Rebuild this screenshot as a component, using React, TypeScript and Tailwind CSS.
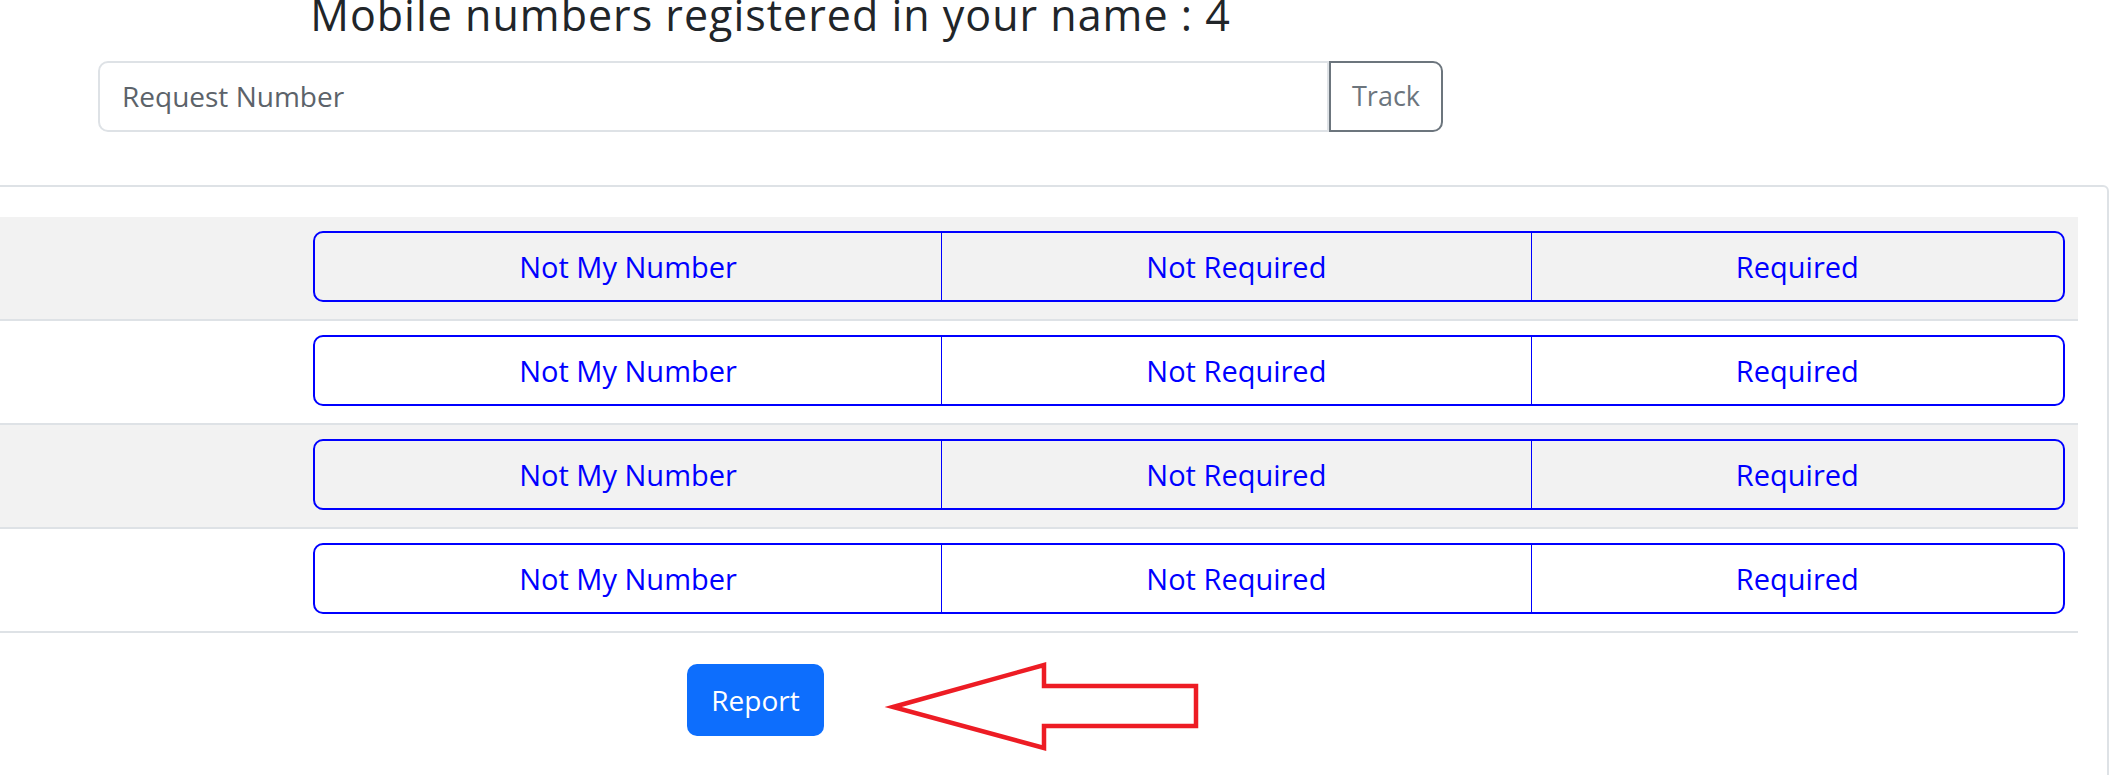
import React from "react";

const rows = [0, 1, 2, 3];

function ChoiceGroup() {
  return (
    <div className="flex flex-1 h-[71px] border-2 border-[#0000ff] rounded-[10px] overflow-hidden">
      <button className="flex-auto px-2 text-[29px] text-[#0000ff] leading-none">Not My Number</button>
      <button className="flex-auto px-2 text-[29px] text-[#0000ff] leading-none border-l-[1.5px] border-[#0000ff]">Not Required</button>
      <button className="flex-auto px-2 text-[29px] text-[#0000ff] leading-none border-l-[1.5px] border-[#0000ff]">Required</button>
    </div>
  );
}

export default function App() {
  return (
    <div
      className="relative w-[2126px] h-[775px] overflow-hidden bg-white"
      style={{ fontFamily: '"Open Sans", "Noto Sans", sans-serif' }}
    >
      <div className="ml-[98px] w-[1345px]">
        <h2 className="-mt-[11px] text-center text-[43px] leading-[1.2] tracking-[1px] text-[#212529] font-normal whitespace-nowrap">
          Mobile numbers registered in your name : 4
        </h2>
        <div className="mt-[20px] flex h-[71px]">
          <input
            className="flex-1 h-full px-[22px] text-[28px] text-[#212529] placeholder:text-[#5c636a] border-2 border-[#dee2e6] rounded-l-[10px] outline-none"
            placeholder="Request Number"
          />
          <button className="h-full w-[114px] text-[27px] text-[#6c757d] border-2 border-[#6c757d] rounded-r-[10px]">
            Track
          </button>
        </div>
      </div>

      <div className="mt-[53px] -ml-[40px] w-[2149px] border-2 border-[#dee2e6] rounded-[6px] px-[29px] pt-[30px] pb-[80px]">
        <div className="flex flex-col">
          {rows.map((r) => (
            <div
              key={r}
              className={`flex h-[104px] pt-[14px] pr-[13px] border-b-2 border-[#dee2e6] ${r % 2 === 0 ? "bg-[#f2f2f2]" : "bg-white"}`}
            >
              <div className="w-[322px] shrink-0" />
              <ChoiceGroup />
            </div>
          ))}
        </div>
        <div className="mt-[31px] flex">
          <button className="ml-[696px] w-[137px] h-[72px] rounded-[10px] bg-[#0d6efd] text-white text-[28px]">
            Report
          </button>
        </div>
      </div>

      <svg
        className="absolute left-0 top-0 pointer-events-none"
        width="2126"
        height="775"
        viewBox="0 0 2126 775"
      >
        <polygon
          points="893,707 1044,665 1044,686 1196,686 1196,726 1044,726 1044,748"
          fill="none"
          stroke="#ed1c24"
          strokeWidth="4.5"
        />
      </svg>
    </div>
  );
}
